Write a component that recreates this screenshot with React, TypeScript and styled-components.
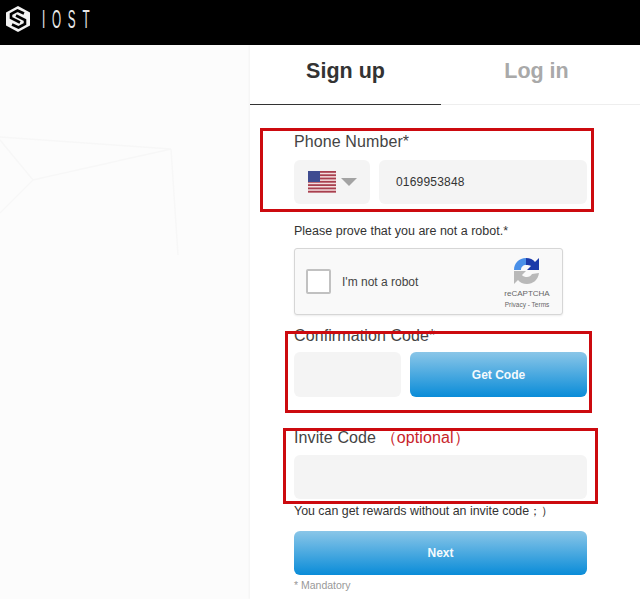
import React from 'react'
import styled, { createGlobalStyle } from 'styled-components'

const GlobalStyle = createGlobalStyle`
	html, body {
		margin: 0;
		padding: 0;
		background: #fcfcfc;
		font-family: "Liberation Sans", Arial, sans-serif;
	}
`

const Page = styled.div`
	position: relative;
	width: 640px;
	height: 599px;
	overflow: hidden;
	color: #333;
`

const Header = styled.header`
	height: 45px;
	background: #000;
	display: flex;
	align-items: center;
	padding: 0 0 7px 5px;
	box-sizing: border-box;
`

const BrandName = styled.span`
	margin-left: 11px;
	color: #e8e8e8;
	font-size: 26px;
	font-weight: 400;
	letter-spacing: 15px;
	line-height: 38px;
	transform: scaleX(0.45);
	transform-origin: left center;
	white-space: nowrap;
`

const Main = styled.main`
	position: relative;
	display: flex;
	height: 554px;
`

const Backdrop = styled.svg`
	position: absolute;
	left: 0;
	top: 0;
`

const Side = styled.div`
	width: 250px;
	flex: none;
`

const Panel = styled.section`
	position: relative;
	flex: 1;
	background: #fff;
	box-shadow: -1px 0 2px rgba(0, 0, 0, 0.04);
`

const Tabs = styled.div`
	display: flex;
	height: 60px;
`

const Tab = styled.div<{ $active?: boolean }>`
	box-sizing: border-box;
	width: ${p => (p.$active ? '191px' : '199px')};
	height: 60px;
	padding: 11px ${p => (p.$active ? '0' : '8px')} 0 0;
	text-align: center;
	font-size: 21.5px;
	font-weight: 700;
	line-height: 30px;
	color: ${p => (p.$active ? '#333' : '#a9a9a9')};
	border-bottom: 1px solid ${p => (p.$active ? '#333' : '#eee')};
`

const Form = styled.form`
	display: flex;
	flex-direction: column;
	width: 293px;
	margin: 0 0 0 44px;
	padding-top: 27px;
`

const Label = styled.label`
	display: block;
	height: 19px;
	font-size: 16px;
	line-height: 19px;
	color: #444;
	letter-spacing: 0.1px;
`

const Optional = styled.span`
	color: #c8242c;
`

const FieldRow = styled.div<{ $gap?: number }>`
	display: flex;
	gap: 9px;
	margin-top: ${p => p.$gap ?? 9}px;
`

const Field = styled.div<{ $width?: number; $height?: number }>`
	box-sizing: border-box;
	flex: ${p => (p.$width ? `0 0 ${p.$width}px` : '1')};
	height: ${p => p.$height ?? 45}px;
	background: #f4f4f4;
	border-radius: 6px;
	display: flex;
	align-items: center;
	font-size: 12px;
	color: #333;
`

const PhoneValue = styled.span`
	padding-left: 17px;
	font-size: 12px;
	letter-spacing: 0.2px;
`

const Caret = styled.span`
	width: 0;
	height: 0;
	margin-left: 5px;
	border-left: 8px solid transparent;
	border-right: 8px solid transparent;
	border-top: 8px solid #a3a3a3;
`

const Flag = styled.svg`
	margin-left: 14px;
	flex: none;
`

const Note = styled.p`
	margin: 20px 0 0;
	font-size: 12.5px;
	line-height: 15px;
	height: 15px;
	color: #333;
`

const Captcha = styled.div`
	box-sizing: border-box;
	display: flex;
	align-items: center;
	width: 269px;
	height: 67px;
	margin-top: 9px;
	padding: 0 10px 0 11px;
	background: #f9f9f9;
	border: 1px solid #d6d6d6;
	border-radius: 3px;
	box-shadow: 0 1px 2px rgba(0, 0, 0, 0.08);
`

const CheckBox = styled.span`
	box-sizing: border-box;
	width: 25px;
	height: 25px;
	background: #fff;
	border: 2px solid #c1c1c1;
	border-radius: 2px;
`

const CaptchaText = styled.span`
	margin-left: 11px;
	flex: 1;
	font-size: 12px;
	color: #444;
`

const CaptchaBrand = styled.div`
	display: flex;
	flex-direction: column;
	align-items: center;
	width: 50px;
	margin-top: 2px;
`

const CaptchaName = styled.span`
	margin-top: 3px;
	font-size: 8px;
	line-height: 11px;
	color: #666;
`

const CaptchaLinks = styled.span`
	font-size: 6.5px;
	line-height: 9px;
	margin-top: 1px;
	color: #666;
	white-space: nowrap;
`

const ActionButton = styled.button<{ $height: number }>`
	flex: 1;
	height: ${p => p.$height}px;
	padding: 0;
	border: 0;
	border-radius: 6px;
	background: linear-gradient(#8ac6e8, #0a8cd8);
	color: #f4fafd;
	font-family: inherit;
	font-size: 12px;
	font-weight: 700;
`

const CodeLabel = styled(Label)`
	margin-top: 11px;
`

const InviteLabel = styled(Label)`
	margin-top: 31px;
`

const Hint = styled.p`
	margin: 5px 0 0;
	height: 14px;
	font-size: 12.4px;
	line-height: 14px;
	color: #333;
	white-space: nowrap;
`

const NextRow = styled.div`
	display: flex;
	margin-top: 13px;
`

const Mandatory = styled.p`
	margin: 4px 0 0;
	font-size: 10.5px;
	line-height: 13px;
	color: #999;
`

// red markers someone drew on top of the screenshot
const Marker = styled.div<{ $left: number; $top: number; $width: number; $height: number }>`
	position: absolute;
	box-sizing: border-box;
	left: ${p => p.$left}px;
	top: ${p => p.$top}px;
	width: ${p => p.$width}px;
	height: ${p => p.$height}px;
	border: 3px solid #cc0a0f;
	pointer-events: none;
`

const Logo = () => (
	<svg width="26" height="28" viewBox="0 0 26 28">
		<path d="M13 1 L25 7.5 V20.5 L13 27 L1 20.5 V7.5 Z" fill="#f2f2f2" />
		<path
			d="M19 8.5 L12.5 5.5 L6 9 V13 L15 17.5 M7 19.5 L13.5 22.5 L20 19 V15 L11 10.5"
			fill="none"
			stroke="#000"
			strokeWidth="2.6"
		/>
	</svg>
)

const stripes = [0, 1, 2, 3, 4, 5, 6]

const UsFlag = () => (
	<Flag width="28" height="22" viewBox="0 0 28 22">
		<rect width="28" height="22" fill="#f3dede" />
		{stripes.map(i => (
			<rect key={i} y={i * 3.3} width="28" height="1.8" fill="#a8404f" />
		))}
		<rect width="12" height="11" fill="#3f4c90" />
	</Flag>
)

const RecaptchaMark = () => (
	<svg width="28" height="28" viewBox="0 0 28 28">
		<path d="M1 13 C1 6 6 1 13 1 L13 8 C10 8 8 10 8 13 Z" fill="#4a90e8" />
		<path d="M13 1 C17 1 20 2.500 22 5 L26 1 V13 H14 L18 9 C17 8.400 15 8 13 8 Z" fill="#1c3aa9" />
		<path d="M1 14 H13 L9 18 C10 19.500 12 20 14 20 C16 20 18 19 19 17 L26 16 C25 23 20 27 14 27 C10 27 7 25.500 5 23 L1 27 Z" fill="#b9b9b9" />
	</svg>
)

const App = () => (
	<Page>
		<GlobalStyle />
		<Header>
			<Logo />
			<BrandName>IOST</BrandName>
		</Header>
		<Main>
			<Backdrop width="250" height="554" viewBox="0 0 250 554">
				<path d="M0 92 L171 104 L33 135 L0 95 M171 104 L178 210 M33 135 L0 168" fill="none" stroke="#f7f7f7" strokeWidth="1.500" />
			</Backdrop>
			<Side />
			<Panel>
				<Tabs>
					<Tab $active>Sign up</Tab>
					<Tab>Log in</Tab>
				</Tabs>
				<Form>
					<Label>Phone Number*</Label>
					<FieldRow>
						<Field $width={76} $height={44}>
							<UsFlag />
							<Caret />
						</Field>
						<Field $height={44}>
							<PhoneValue>0169953848</PhoneValue>
						</Field>
					</FieldRow>
					<Note>Please prove that you are not a robot.*</Note>
					<Captcha>
						<CheckBox />
						<CaptchaText>I'm not a robot</CaptchaText>
						<CaptchaBrand>
							<RecaptchaMark />
							<CaptchaName>reCAPTCHA</CaptchaName>
							<CaptchaLinks>Privacy - Terms</CaptchaLinks>
						</CaptchaBrand>
					</Captcha>
					<CodeLabel>Confirmation Code*</CodeLabel>
					<FieldRow $gap={7}>
						<Field $width={107} />
						<ActionButton type="button" $height={45}>Get Code</ActionButton>
					</FieldRow>
					<InviteLabel>
						Invite Code <Optional>（optional）</Optional>
					</InviteLabel>
					<FieldRow $gap={8}>
						<Field $height={44} />
					</FieldRow>
					<Hint>You can get rewards without an invite code；）</Hint>
					<NextRow>
						<ActionButton type="button" $height={44}>Next</ActionButton>
					</NextRow>
					<Mandatory>* Mandatory</Mandatory>
				</Form>
			</Panel>
		</Main>
		<Marker $left={260} $top={128} $width={334} $height={84} />
		<Marker $left={285} $top={331} $width={307} $height={82} />
		<Marker $left={283} $top={428} $width={315} $height={76} />
	</Page>
)

export default App
